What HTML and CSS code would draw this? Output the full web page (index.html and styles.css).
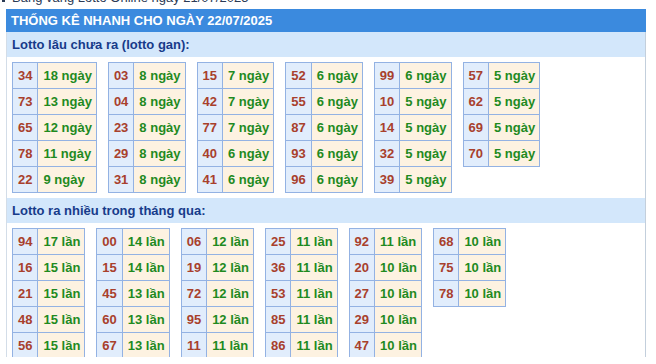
FILE: index.html
```html
<!DOCTYPE html>
<html lang="vi">
<head>
<meta charset="utf-8">
<title>Thống kê nhanh</title>
<link rel="stylesheet" href="styles.css">
</head>
<body>
<div class="page">
  <div class="top"><span class="top-text"><i class="bullet"></i>Bảng vàng Lotto Online ngày 21/07/2025</span></div>
  <div class="box">
    <div class="box-title">THỐNG KÊ NHANH CHO NGÀY 22/07/2025</div>
    <div class="box-body">
      <div class="sub">Lotto lâu chưa ra (lotto gan):</div>
      <div class="tables">
        <table class="lt"><tr><td class="n">34</td><td class="v">18 ngày</td></tr><tr><td class="n">73</td><td class="v">13 ngày</td></tr><tr><td class="n">65</td><td class="v">12 ngày</td></tr><tr><td class="n">78</td><td class="v">11 ngày</td></tr><tr><td class="n">22</td><td class="v">9 ngày</td></tr></table>
        <table class="lt"><tr><td class="n">03</td><td class="v">8 ngày</td></tr><tr><td class="n">04</td><td class="v">8 ngày</td></tr><tr><td class="n">23</td><td class="v">8 ngày</td></tr><tr><td class="n">29</td><td class="v">8 ngày</td></tr><tr><td class="n">31</td><td class="v">8 ngày</td></tr></table>
        <table class="lt"><tr><td class="n">15</td><td class="v">7 ngày</td></tr><tr><td class="n">42</td><td class="v">7 ngày</td></tr><tr><td class="n">77</td><td class="v">7 ngày</td></tr><tr><td class="n">40</td><td class="v">6 ngày</td></tr><tr><td class="n">41</td><td class="v">6 ngày</td></tr></table>
        <table class="lt"><tr><td class="n">52</td><td class="v">6 ngày</td></tr><tr><td class="n">55</td><td class="v">6 ngày</td></tr><tr><td class="n">87</td><td class="v">6 ngày</td></tr><tr><td class="n">93</td><td class="v">6 ngày</td></tr><tr><td class="n">96</td><td class="v">6 ngày</td></tr></table>
        <table class="lt"><tr><td class="n">99</td><td class="v">6 ngày</td></tr><tr><td class="n">10</td><td class="v">5 ngày</td></tr><tr><td class="n">14</td><td class="v">5 ngày</td></tr><tr><td class="n">32</td><td class="v">5 ngày</td></tr><tr><td class="n">39</td><td class="v">5 ngày</td></tr></table>
        <table class="lt"><tr><td class="n">57</td><td class="v">5 ngày</td></tr><tr><td class="n">62</td><td class="v">5 ngày</td></tr><tr><td class="n">69</td><td class="v">5 ngày</td></tr><tr><td class="n">70</td><td class="v">5 ngày</td></tr></table>
      </div>
      <div class="sub">Lotto ra nhiều trong tháng qua:</div>
      <div class="tables">
        <table class="lt"><tr><td class="n">94</td><td class="v">17 lần</td></tr><tr><td class="n">16</td><td class="v">15 lần</td></tr><tr><td class="n">21</td><td class="v">15 lần</td></tr><tr><td class="n">48</td><td class="v">15 lần</td></tr><tr><td class="n">56</td><td class="v">15 lần</td></tr></table>
        <table class="lt"><tr><td class="n">00</td><td class="v">14 lần</td></tr><tr><td class="n">15</td><td class="v">14 lần</td></tr><tr><td class="n">45</td><td class="v">13 lần</td></tr><tr><td class="n">60</td><td class="v">13 lần</td></tr><tr><td class="n">67</td><td class="v">13 lần</td></tr></table>
        <table class="lt"><tr><td class="n">06</td><td class="v">12 lần</td></tr><tr><td class="n">19</td><td class="v">12 lần</td></tr><tr><td class="n">72</td><td class="v">12 lần</td></tr><tr><td class="n">95</td><td class="v">12 lần</td></tr><tr><td class="n">11</td><td class="v">11 lần</td></tr></table>
        <table class="lt"><tr><td class="n">25</td><td class="v">11 lần</td></tr><tr><td class="n">36</td><td class="v">11 lần</td></tr><tr><td class="n">53</td><td class="v">11 lần</td></tr><tr><td class="n">85</td><td class="v">11 lần</td></tr><tr><td class="n">86</td><td class="v">11 lần</td></tr></table>
        <table class="lt"><tr><td class="n">92</td><td class="v">11 lần</td></tr><tr><td class="n">20</td><td class="v">10 lần</td></tr><tr><td class="n">27</td><td class="v">10 lần</td></tr><tr><td class="n">29</td><td class="v">10 lần</td></tr><tr><td class="n">47</td><td class="v">10 lần</td></tr></table>
        <table class="lt"><tr><td class="n">68</td><td class="v">10 lần</td></tr><tr><td class="n">75</td><td class="v">10 lần</td></tr><tr><td class="n">78</td><td class="v">10 lần</td></tr></table>
      </div>
    </div>
  </div>
</div>
</body>
</html>
```
FILE: styles.css
```css
html, body {
  margin: 0;
  padding: 0;
  background: #ffffff;
}
body {
  font-family: "Liberation Sans", Arial, sans-serif;
  font-size: 13px;
}
.page {
  height: 357px;
  overflow: hidden;
}
.top {
  height: 9px;
  overflow: hidden;
}
.top-text {
  display: block;
  margin-top: -10px;
  line-height: 15px;
  padding-left: 2px;
  color: #2b3a55;
  white-space: nowrap;
}
.bullet {
  display: inline-block;
  width: 3px;
  height: 3px;
  background: #2b3a55;
  margin-right: 7px;
  vertical-align: baseline;
}
.box {
  margin-left: 6px;
  width: 640px;
}
.box-title {
  background: #3b8ade;
  color: #ffffff;
  font-weight: bold;
  height: 23px;
  line-height: 23px;
  padding-left: 5px;
  white-space: nowrap;
}
.box-body {
  border-left: 1px solid #d3dde8;
  border-right: 1px solid #c3cfdc;
}
.sub {
  background: #d3e7fb;
  color: #173b8a;
  font-weight: bold;
  height: 25px;
  line-height: 25px;
  padding-left: 5px;
}
.tables {
  display: flex;
  align-items: flex-start;
  gap: 11px;
  padding: 5px 5px 5px 5px;
}
.lt {
  border-collapse: collapse;
  font-weight: bold;
}
.lt td {
  border: 1px solid #93b2e3;
  height: 26px;
  padding: 0 5px;
  box-sizing: border-box;
  line-height: 15px;
  white-space: nowrap;
}
.lt .n {
  background: #e1edfc;
  color: #a8402c;
  text-align: center;
}
.lt .v {
  background: #fdf2e1;
  color: #1f8a1f;
  text-align: left;
  padding-right: 4px;
}
```
